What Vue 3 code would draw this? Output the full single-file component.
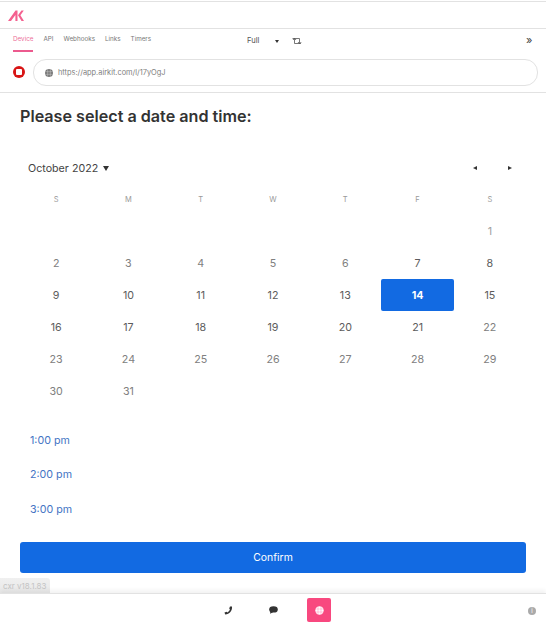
<script setup>
import { ref } from "vue";

const tabs = ["Device", "API", "Webhooks", "Links", "Timers"];
const weekdays = ["S", "M", "T", "W", "T", "F", "S"];
const times = ["1:00 pm", "2:00 pm", "3:00 pm"];
const selected = ref(14);

// October 2022 starts on a Saturday
const days = [...Array(6).fill(null)];
for (let d = 1; d <= 31; d++) days.push(d);

const isMuted = (d) => d <= 6 || d >= 22;
</script>

<template>
  <div class="page">
    <header class="logo-bar">
      <svg class="logo" width="16" height="11" viewBox="0 0 16 11">
        <path d="M0 11 L7.5 0.5 L9.5 0.5 L9.5 11 L7.4 11 L7.4 5 L3 11 Z" fill="#f4608f" />
        <path d="M10 5.2 L13.4 0.5 L15.8 0.5 L12.4 5.2 L16 11 L13.5 11 Z" fill="#f4608f" />
      </svg>
    </header>

    <nav class="tool-bar">
      <div class="tabs">
        <span v-for="(t, i) in tabs" :key="t" class="tab" :class="{ active: i === 0 }">{{ t }}</span>
      </div>
      <div class="view-select">
        <span>Full</span>
        <i class="caret"></i>
        <svg width="10" height="8" viewBox="0 0 10 8" fill="none" stroke="#555" stroke-width="0.8">
          <path d="M0.5 1.5 H7.5 V6.5 M6 5 L7.5 6.8 L9.3 5" />
          <path d="M9 6.5 H2.5 V1.5 M1 3 L2.5 1.2 L4 3" />
        </svg>
      </div>
      <span class="more">»</span>
    </nav>

    <div class="url-row">
      <span class="record"><i></i></span>
      <div class="url-box">
        <svg width="8" height="8" viewBox="0 0 8 8" fill="#777">
          <circle cx="4" cy="4" r="4" />
          <path d="M0 2.7 H8 M0 5.3 H8 M2.7 0 V8 M5.3 0 V8" stroke="#ddd" stroke-width="0.4" />
        </svg>
        <span>https://app.airkit.com/l/17yOgJ</span>
      </div>
    </div>

    <main class="content">
      <h1>Please select a date and time:</h1>

      <div class="month-row">
        <div class="month">October 2022 <i class="month-caret"></i></div>
        <div class="arrows">
          <i class="arrow left"></i>
          <i class="arrow right"></i>
        </div>
      </div>

      <div class="week">
        <span v-for="(w, i) in weekdays" :key="i">{{ w }}</span>
      </div>
      <div class="days">
        <span
          v-for="(d, i) in days"
          :key="i"
          class="day"
          :class="{ muted: d && isMuted(d), selected: d === selected, first: d === 1 }"
        >{{ d }}</span>
      </div>

      <div class="times">
        <a v-for="t in times" :key="t">{{ t }}</a>
      </div>

      <button class="confirm">Confirm</button>
    </main>

    <div class="version">cxr v18.1.83</div>

    <footer class="bottom-bar">
      <svg class="phone" width="9" height="9" viewBox="0 0 9 9" fill="#333">
        <path d="M6 0.5 L8 0.5 C8.5 4.5 5.5 8.5 1.2 8.5 L0.5 6.6 L2.6 5.7 L3.4 6.4 C4.8 5.6 5.6 4.6 5.9 3.2 L5.2 2.6 Z" />
      </svg>
      <svg class="chat" width="9" height="8" viewBox="0 0 9 8" fill="#333">
        <ellipse cx="4.5" cy="3.4" rx="4.3" ry="3.2" />
        <path d="M1.5 5 L1 7.8 L4 6.2 Z" />
      </svg>
      <span class="web-btn">
        <svg width="9" height="9" viewBox="0 0 9 9" fill="#fff">
          <circle cx="4.5" cy="4.5" r="4.2" />
          <path d="M0 3 H9 M0 6 H9 M3 0 V9 M6 0 V9" stroke="#f7a" stroke-width="0.4" />
        </svg>
      </span>
      <span class="info">i</span>
    </footer>
  </div>
</template>

<style>
html,
body {
  margin: 0;
  background: #fff;
}
</style>

<style scoped>
.page {
  position: relative;
  width: 546px;
  height: 627px;
  display: flex;
  flex-direction: column;
  font-family: Inter, "Liberation Sans", sans-serif;
  color: #333;
  overflow: hidden;
  background: #fff;
}

.logo-bar {
  height: 28px;
  flex-shrink: 0;
  box-sizing: border-box;
  margin-top: 1px;
  border-top: 1px solid #e2e2e2;
  border-bottom: 1px solid #e2e2e2;
  display: flex;
  align-items: center;
  padding-left: 8px;
}

.tool-bar {
  height: 30px;
  flex-shrink: 0;
  position: relative;
  display: flex;
  align-items: flex-start;
  font-size: 6.3px;
  color: #777;
}
.tabs {
  display: flex;
  gap: 10px;
  padding-left: 13px;
}
.tab {
  height: 23px;
  box-sizing: border-box;
  padding-top: 6px;
  line-height: 9px;
}
.tab.active {
  color: #ec6f9a;
  border-bottom: 2px solid #ec5a8e;
}
.view-select {
  position: absolute;
  left: 247px;
  top: 7px;
  display: flex;
  align-items: center;
  font-size: 7.6px;
  line-height: 10px;
  color: #555;
}
.caret {
  width: 0;
  height: 0;
  margin: 0 13px 0 15.5px;
  border-left: 2.5px solid transparent;
  border-right: 2.5px solid transparent;
  border-top: 3px solid #333;
}
.more {
  position: absolute;
  left: 526px;
  top: 5px;
  font-size: 11px;
  line-height: 12px;
  color: #444;
}

.url-row {
  height: 34px;
  flex-shrink: 0;
  box-sizing: border-box;
  border-bottom: 1px solid #e2e2e2;
  display: flex;
  align-items: flex-start;
  padding-left: 13px;
  gap: 8px;
}
.record {
  width: 12px;
  height: 12px;
  margin-top: 7px;
  border-radius: 50%;
  background: #d81515;
  display: flex;
  align-items: center;
  justify-content: center;
}
.record i {
  width: 6px;
  height: 6px;
  border-radius: 1px;
  background: #fff;
}
.url-box {
  width: 505px;
  height: 27px;
  box-sizing: border-box;
  border: 1px solid #e2e2e2;
  border-radius: 13px;
  display: flex;
  align-items: center;
  gap: 5px;
  padding-left: 11px;
  font-size: 7.4px;
  color: #808080;
}

.content {
  flex: 1;
  min-height: 0;
  padding: 0 20px;
}
h1 {
  margin: 13px 0 0;
  font-size: 16.15px;
  line-height: 21px;
  font-weight: 600;
  color: #333;
}
.month-row {
  margin-top: 32px;
  height: 18px;
  display: flex;
  align-items: center;
  justify-content: space-between;
  padding: 0 14px 0 8px;
}
.month {
  font-size: 10.7px;
  color: #444;
  display: flex;
  align-items: center;
}
.month-caret {
  margin-left: 5px;
  width: 0;
  height: 0;
  border-left: 3px solid transparent;
  border-right: 3px solid transparent;
  border-top: 5px solid #333;
}
.arrows {
  display: flex;
  gap: 31px;
}
.arrow {
  width: 0;
  height: 0;
  border-top: 2.5px solid transparent;
  border-bottom: 2.5px solid transparent;
}
.arrow.left {
  border-right: 4px solid #333;
}
.arrow.right {
  border-left: 4px solid #333;
}

.week,
.days {
  display: grid;
  grid-template-columns: repeat(7, 1fr);
  text-align: center;
}
.week {
  margin-top: 18px;
  font-size: 7.5px;
  line-height: 10px;
  color: #999;
}
.days {
  margin-top: 10px;
  grid-auto-rows: 32.1px;
  font-size: 10.7px;
}
.day {
  display: flex;
  align-items: center;
  justify-content: center;
  border-radius: 2px;
  color: #5c5c5c;
}
.day.muted {
  color: #808080;
}
.day.first {
  color: #a0a0a0;
}
.day.selected {
  background: #126ae2;
  color: #fff;
  font-weight: 700;
}

.times {
  margin-top: 16px;
  display: flex;
  flex-direction: column;
  padding-left: 10px;
  font-size: 10.7px;
  line-height: 34.5px;
  color: #4474c4;
}

.confirm {
  display: block;
  width: 506px;
  height: 31px;
  margin-top: 15px;
  border: none;
  border-radius: 3px;
  background: #126ae2;
  color: #fff;
  font-family: inherit;
  font-size: 10.4px;
}

.version {
  position: absolute;
  left: 0;
  top: 578px;
  height: 16px;
  padding: 0 4px 0 3px;
  background: linear-gradient(#f0f0f0, #e8e8e8);
  border-radius: 0 3px 0 0;
  font-size: 8px;
  line-height: 16px;
  color: #c4c4c4;
}

.bottom-bar {
  height: 33px;
  flex-shrink: 0;
  position: relative;
  border-top: 1px solid #e2e2e2;
  box-shadow: 0 -3px 4px rgba(0, 0, 0, 0.05);
}
.phone {
  position: absolute;
  left: 224px;
  top: 12px;
}
.chat {
  position: absolute;
  left: 269px;
  top: 12px;
}
.web-btn {
  position: absolute;
  left: 307px;
  top: 4px;
  width: 24px;
  height: 24px;
  border-radius: 2px;
  background: #f8487f;
  display: flex;
  align-items: center;
  justify-content: center;
}
.info {
  position: absolute;
  left: 528px;
  top: 13px;
  width: 8px;
  height: 8px;
  border-radius: 50%;
  background: #aaa;
  color: #fff;
  font-size: 6px;
  line-height: 8px;
  text-align: center;
}
</style>
